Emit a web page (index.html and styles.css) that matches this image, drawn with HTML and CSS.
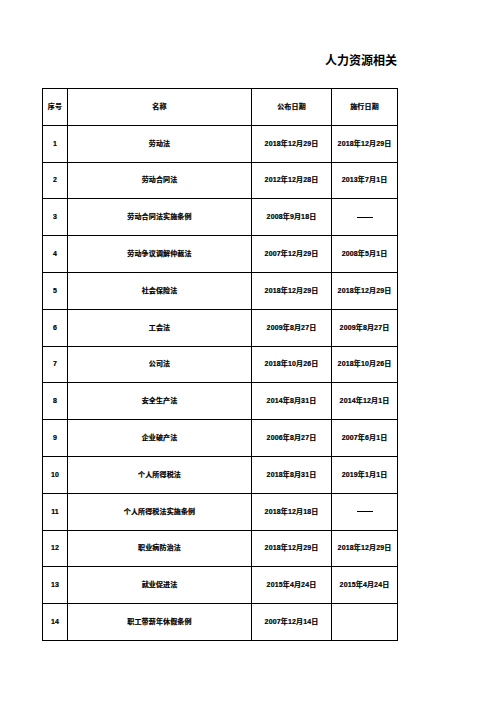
FILE: index.html
```html
<!DOCTYPE html>
<html lang="zh-CN">
<head>
<meta charset="utf-8">
<link rel="stylesheet" href="styles.css">
</head>
<body>
<div class="page">
  <div class="title">人力资源相关</div>
  <table class="law-table">
    <colgroup>
      <col class="c-no"><col class="c-name"><col class="c-pub"><col class="c-eff">
    </colgroup>
    <tbody>
      <tr><td>序号</td><td>名称</td><td>公布日期</td><td>施行日期</td></tr>
      <tr><td>1</td><td>劳动法</td><td>2018年12月29日</td><td>2018年12月29日</td></tr>
      <tr><td>2</td><td>劳动合同法</td><td>2012年12月28日</td><td>2013年7月1日</td></tr>
      <tr><td>3</td><td>劳动合同法实施条例</td><td>2008年9月18日</td><td><span class="dash"></span></td></tr>
      <tr><td>4</td><td>劳动争议调解仲裁法</td><td>2007年12月29日</td><td>2008年5月1日</td></tr>
      <tr><td>5</td><td>社会保险法</td><td>2018年12月29日</td><td>2018年12月29日</td></tr>
      <tr><td>6</td><td>工会法</td><td>2009年8月27日</td><td>2009年8月27日</td></tr>
      <tr><td>7</td><td>公司法</td><td>2018年10月26日</td><td>2018年10月26日</td></tr>
      <tr><td>8</td><td>安全生产法</td><td>2014年8月31日</td><td>2014年12月1日</td></tr>
      <tr><td>9</td><td>企业破产法</td><td>2006年8月27日</td><td>2007年6月1日</td></tr>
      <tr><td>10</td><td>个人所得税法</td><td>2018年8月31日</td><td>2019年1月1日</td></tr>
      <tr><td>11</td><td>个人所得税法实施条例</td><td>2018年12月18日</td><td><span class="dash"></span></td></tr>
      <tr><td>12</td><td>职业病防治法</td><td>2018年12月29日</td><td>2018年12月29日</td></tr>
      <tr><td>13</td><td>就业促进法</td><td>2015年4月24日</td><td>2015年4月24日</td></tr>
      <tr><td>14</td><td>职工带薪年休假条例</td><td>2007年12月14日</td><td></td></tr>
    </tbody>
  </table>
</div>
</body>
</html>
```

FILE: styles.css
```css
html, body {
  margin: 0;
  padding: 0;
  background: #fff;
}
.page {
  padding-left: 42px;
  padding-top: 54px;
  font-family: "Liberation Sans", "Noto Sans CJK SC", sans-serif;
  color: #000;
}
.title {
  width: 355px;
  text-align: right;
  font-size: 12px;
  line-height: 12px;
  font-weight: bold;
  font-family: "Noto Sans CJK SC", sans-serif;
  margin-bottom: 22px;
}
.law-table {
  width: 356px;
  table-layout: fixed;
  border-collapse: collapse;
  font-size: 7px;
  font-weight: bold;
}
.c-no { width: 25px; }
.c-name { width: 184px; }
.c-pub { width: 80px; }
.c-eff { width: 66px; }
.law-table td {
  border: 1px solid #000;
  height: 35.8px;
  padding: 0;
  text-align: center;
  vertical-align: middle;
  line-height: 8px;
  white-space: nowrap;
  letter-spacing: 0.15px;
  -webkit-text-stroke: 0.2px #000;
}
.dash {
  display: inline-block;
  width: 16px;
  height: 1px;
  background: #000;
  vertical-align: middle;
}
```
